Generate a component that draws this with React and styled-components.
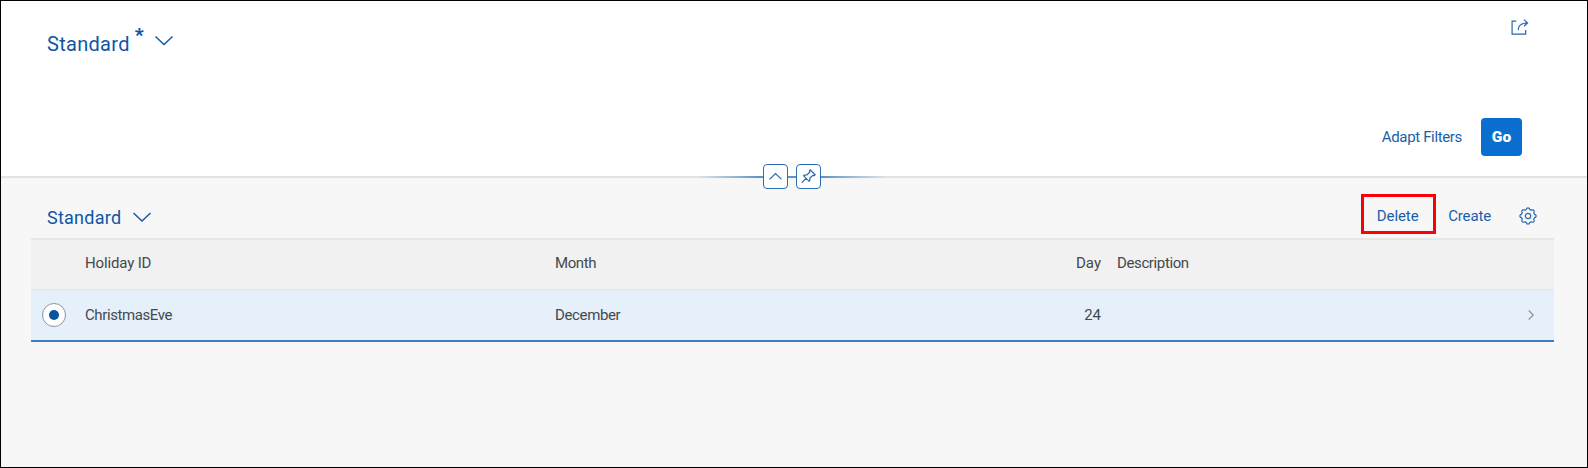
import React from "react";
import styled, { createGlobalStyle } from "styled-components";

const GlobalStyle = createGlobalStyle`
  * { box-sizing: border-box; }
  body { margin: 0; font-family: Roboto, "Liberation Sans", sans-serif; }
`;

const Page = styled.div`
  width: 1588px;
  height: 468px;
  border: 1px solid #000;
  background: #f7f7f7;
  display: flex;
  flex-direction: column;
  overflow: hidden;
`;

const FilterHeader = styled.header`
  position: relative;
  height: 175px;
  flex: none;
  padding: 17px 65px 0 46px;
  background: #fff;
  box-shadow: 0 1px 1px 1px #e3e3e3;
  display: flex;
  flex-direction: column;
  justify-content: space-between;
`;

const HeaderRow = styled.div`
  display: flex;
  align-items: flex-start;
  justify-content: space-between;
`;

const VariantButton = styled.button`
  display: flex;
  align-items: flex-start;
  padding: 0;
  border: 0;
  background: none;
  color: #0f56a4;
  font: 400 ${(p) => p.$size}px/26px Roboto, sans-serif;
  letter-spacing: ${(p) => p.$spacing}px;
`;

const VariantName = styled.span`
  margin-top: ${(p) => p.$top || 0}px;
`;

const DirtyMark = styled.span`
  width: 9px;
  margin: 4px 0 0 5px;
  font-size: 19px;
  font-weight: 900;
  letter-spacing: 0;
`;

const Icon = styled.svg`
  display: block;
  flex: none;
  fill: none;
  stroke: #2467ae;
  stroke-width: 1.2;
  overflow: visible;
`;

const VariantArrow = styled(Icon)`
  margin: ${(p) => p.$margin};
  stroke: #0f56a4;
  stroke-width: 1.4;
`;

const ShareIcon = styled(Icon)`
  margin-right: -7px;
`;

const FilterActions = styled.div`
  display: flex;
  align-items: center;
  justify-content: flex-end;
  gap: 19px;
  padding-bottom: 20px;
`;

const TextButton = styled.button`
  padding: 0;
  border: 0;
  background: none;
  color: #1a5fa9;
  font: 400 15px/20px Roboto, sans-serif;
  letter-spacing: ${(p) => p.$spacing || 0}px;
  white-space: nowrap;
`;

const GoButton = styled.button`
  width: 41px;
  height: 38px;
  padding: 0;
  border: 0;
  border-radius: 4px;
  background: #0a6ed1;
  color: #fff;
  font: 900 15.5px/38px Roboto, sans-serif;
`;

const HeaderToggles = styled.div`
  position: absolute;
  left: 697px;
  top: 163px;
  width: 188px;
  height: 25px;
  padding-left: 65px;
  display: flex;
  gap: 8px;
  background: linear-gradient(90deg, rgba(15, 86, 164, 0), #5f93c7 33%, #5f93c7 66%, rgba(15, 86, 164, 0)) 0 12px / 100% 2px no-repeat;
`;

const ToggleButton = styled.button`
  width: 25px;
  height: 25px;
  padding: 0;
  border: 1px solid #2c6db3;
  border-radius: 4px;
  background: #fff;
  display: grid;
  place-items: center;
`;

const Content = styled.main`
  padding: 17px 33px 0 30px;
`;

const Toolbar = styled.div`
  height: 45px;
  padding: 0 17px 0 16px;
  display: flex;
  align-items: flex-start;
  justify-content: space-between;
`;

const ToolbarActions = styled.div`
  display: flex;
  align-items: center;
  padding-top: 1px;
`;

const Highlight = styled.div`
  width: 75px;
  height: 40px;
  margin-right: 12px;
  padding: 4px 2px 0 0;
  border: 3px solid #fb0007;
  display: flex;
  align-items: center;
  justify-content: center;
`;

const CreateAction = styled.div`
  display: flex;
  padding-top: 4px;
`;

const GearIcon = styled(Icon)`
  margin-left: 28px;
  margin-top: 4px;
`;

const Table = styled.div`
  border-top: 2px solid #e6e6e6;
  border-bottom: 2px solid #3f7ebc;
`;

const Row = styled.div`
  height: 50px;
  padding-right: 20px;
  display: grid;
  grid-template-columns: 54px 470px 490px 56px 16px 1fr 6px;
  align-items: center;
  background: ${(p) => (p.$header ? "#f1f1f1" : "#e5f0fa")};
  border-bottom: ${(p) => (p.$header ? "1px solid #e2e4e6" : "0")};
`;

const Cell = styled.div`
  grid-column: ${(p) => p.$col};
  color: #44494e;
  font-size: 15px;
  line-height: 20px;
  white-space: nowrap;
  text-align: ${(p) => (p.$end ? "right" : "left")};
  letter-spacing: ${(p) => p.$spacing || 0}px;
  padding-bottom: ${(p) => (p.$header ? 3 : 0)}px;
`;

const Radio = styled.span`
  width: 24px;
  height: 24px;
  margin: 0 0 0 11px;
  border: 1px solid #8b949b;
  border-radius: 50%;
  background: #fff;
  display: grid;
  place-items: center;

  &::after {
    content: "";
    width: 10px;
    height: 10px;
    border-radius: 50%;
    background: #0854a0;
  }
`;

const RowArrow = styled(Icon)`
  grid-column: 7;
  stroke: #8d959b;
`;

const GEAR_POINTS = 96;

function gearPath() {
  const points = [];
  for (let i = 0; i < GEAR_POINTS; i++) {
    const a = (i / GEAR_POINTS) * 2 * Math.PI;
    const wave = Math.tanh(2.2 * Math.cos(8 * a));
    const r = 7.3 + 0.75 * wave;
    points.push(`${(9 + r * Math.sin(a)).toFixed(2)} ${(9 - r * Math.cos(a)).toFixed(2)}`);
  }
  return `M${points.join("L")}Z`;
}

export default function App() {
  return (
    <Page>
      <GlobalStyle />
      <FilterHeader>
        <HeaderRow>
          <VariantButton $size={20} $spacing={0.3}>
            <VariantName $top={13}>Standard</VariantName>
            <DirtyMark>*</DirtyMark>
            <VariantArrow $margin="18px 0 0 11px" width="18" height="10" viewBox="0 0 18 10">
              <path d="M.5 .5 9 8.5 17.5 .5" />
            </VariantArrow>
          </VariantButton>
          <ShareIcon width="18" height="17" viewBox="0 0 18 17">
            <path d="M5.3 3.1H1.1V16.2H14.7V12M7.2 12.2C7.2 7.6 9.3 5.1 16.4 4.9M13 1.6 16.6 4.9 13 8.2" />
          </ShareIcon>
        </HeaderRow>
        <FilterActions>
          <TextButton $spacing={-0.35}>Adapt Filters</TextButton>
          <GoButton>Go</GoButton>
        </FilterActions>
        <HeaderToggles>
          <ToggleButton aria-label="Collapse header">
            <Icon width="13" height="7" viewBox="0 0 13 7"><path d="M.5 6.4 6.5 .6 12.5 6.4" /></Icon>
          </ToggleButton>
          <ToggleButton aria-label="Pin header">
            <Icon width="15" height="15" viewBox="0 0 15 15">
              <path d="M.8 13.7 5.2 9.3M9.2 .9 14.1 5.8 13.2 6.5 11.9 6.3 8.9 9.1 8.8 11.7 8.1 12.3 2.6 6.8 3.3 6.1 5.9 6 8.8 3 8.6 1.5Z" />
            </Icon>
          </ToggleButton>
        </HeaderToggles>
      </FilterHeader>
      <Content>
        <Toolbar>
          <VariantButton $size={18} $spacing={0.25}>
            <VariantName $top={12}>Standard</VariantName>
            <VariantArrow $margin="19px 0 0 12px" width="18" height="10" viewBox="0 0 18 10">
              <path d="M.5 1 9 9 17.5 1" />
            </VariantArrow>
          </VariantButton>
          <ToolbarActions>
            <Highlight><TextButton $spacing={-0.1}>Delete</TextButton></Highlight>
            <CreateAction><TextButton $spacing={-0.15}>Create</TextButton></CreateAction>
            <GearIcon width="18" height="18" viewBox="0 0 18 18">
              <path strokeLinejoin="round" d={gearPath()} />
              <circle cx="9" cy="9" r="2.7" />
            </GearIcon>
          </ToolbarActions>
        </Toolbar>
        <Table>
          <Row $header>
            <Cell $header $col="2" $spacing={-0.15}>Holiday ID</Cell>
            <Cell $header $col="3" $spacing={-0.4}>Month</Cell>
            <Cell $header $col="4" $end>Day</Cell>
            <Cell $header $col="6" $spacing={-0.38}>Description</Cell>
          </Row>
          <Row>
            <Radio role="radio" aria-checked="true" />
            <Cell $col="2" $spacing={-0.4}>ChristmasEve</Cell>
            <Cell $col="3" $spacing={-0.36}>December</Cell>
            <Cell $col="4" $end>24</Cell>
            <RowArrow width="6" height="10" viewBox="0 0 6 10"><path d="M.7 .5 5.2 5 .7 9.5" /></RowArrow>
          </Row>
        </Table>
      </Content>
    </Page>
  );
}
